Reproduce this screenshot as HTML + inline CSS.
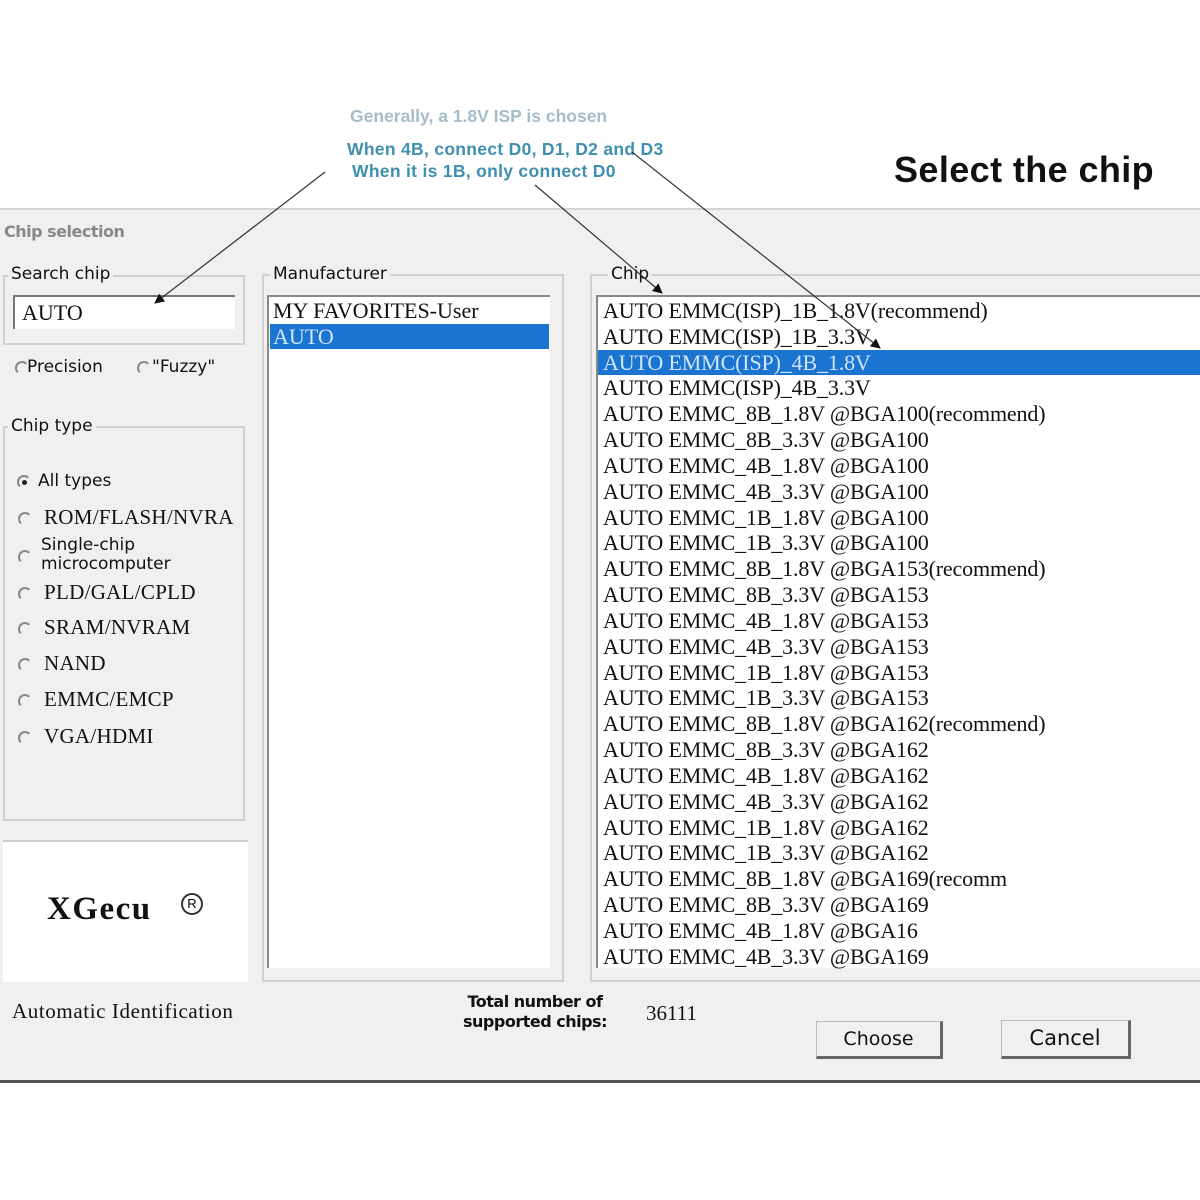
<!DOCTYPE html>
<html><head><meta charset="utf-8"><style>
*{margin:0;padding:0;box-sizing:border-box}
body{width:1200px;height:1200px;background:#fff;position:relative;overflow:hidden;font-family:"Liberation Sans",sans-serif}
.a{position:absolute;white-space:nowrap}
.s{font-family:"DejaVu Sans","Liberation Sans",sans-serif}
.serif{font-family:"Liberation Serif",serif;color:#111}
.gb{position:absolute;border:2px solid #d0d0d0}
.lbl{position:absolute;background:#f0f0f0;padding:0 3px;font-size:17px;color:#111;line-height:20px}
.rad{position:absolute;width:14px;height:14px;border-radius:50%;border:2px solid #888;border-right-color:transparent;border-bottom-color:transparent}
.row{position:absolute;left:603px;font-family:"Liberation Serif",serif;font-size:22px;letter-spacing:-0.15px;color:#111;line-height:26px;white-space:nowrap}
.ann{font-family:"Liberation Sans",sans-serif;font-weight:bold;font-size:17.5px}
</style></head><body>
<div class="a ann" style="left:350px;top:106px;color:#a6bcc8">Generally, a 1.8V ISP is chosen</div>
<div class="a ann" style="left:347px;top:139px;color:#3f8fb0;letter-spacing:0.3px">When 4B, connect D0, D1, D2 and D3</div>
<div class="a ann" style="left:352px;top:161px;color:#3f8fb0;letter-spacing:0.3px">When it is 1B, only connect D0</div>
<div class="a" style="left:894px;top:149px;font-size:36px;font-weight:bold;color:#111;font-family:'Liberation Sans',sans-serif;letter-spacing:0.4px">Select the chip</div>

<div class="a" style="left:0;top:208px;width:1200px;height:875px;background:#f0f0f0;border-top:2px solid #d4d4d4;border-bottom:3px solid #555"></div>
<div class="a s" style="left:4px;top:222px;font-size:16px;font-weight:bold;color:#888;letter-spacing:-0.5px">Chip selection</div>

<div class="gb" style="left:3px;top:275px;width:242px;height:70px"></div>
<div class="lbl s" style="left:8px;top:264px">Search chip</div>
<div class="a serif" style="left:13px;top:295px;width:222px;height:34px;background:#fff;border-top:2px solid #777;border-left:2px solid #777;font-size:22px;padding:3px 7px">AUTO</div>
<div class="rad" style="left:15px;top:361px"></div>
<div class="a s" style="left:27px;top:357px;font-size:17px;color:#111">Precision</div>
<div class="rad" style="left:137px;top:361px"></div>
<div class="a s" style="left:152px;top:357px;font-size:17px;color:#111">"Fuzzy"</div>

<div class="gb" style="left:3px;top:426px;width:242px;height:395px"></div>
<div class="lbl s" style="left:8px;top:416px">Chip type</div>
<div class="rad" style="left:17px;top:475px"></div><div class="a" style="left:22px;top:480px;width:5px;height:5px;border-radius:50%;background:#222"></div>
<div class="a s" style="left:38px;top:471px;font-size:17px;color:#111">All types</div>
<div class="rad" style="left:18px;top:512px"></div><div class="a serif" style="left:44px;top:505px;font-size:21px;letter-spacing:0.3px">ROM/FLASH/NVRA</div>
<div class="rad" style="left:18px;top:550px"></div><div class="a s" style="left:41px;top:536px;font-size:17px;color:#111;line-height:19px">Single-chip<br>microcomputer</div>
<div class="rad" style="left:18px;top:587px"></div><div class="a serif" style="left:44px;top:580px;font-size:21px;letter-spacing:0.3px">PLD/GAL/CPLD</div>
<div class="rad" style="left:18px;top:622px"></div><div class="a serif" style="left:44px;top:615px;font-size:21px;letter-spacing:0.3px">SRAM/NVRAM</div>
<div class="rad" style="left:18px;top:658px"></div><div class="a serif" style="left:44px;top:651px;font-size:21px;letter-spacing:0.3px">NAND</div>
<div class="rad" style="left:18px;top:694px"></div><div class="a serif" style="left:44px;top:687px;font-size:21px;letter-spacing:0.3px">EMMC/EMCP</div>
<div class="rad" style="left:18px;top:731px"></div><div class="a serif" style="left:44px;top:724px;font-size:21px;letter-spacing:0.3px">VGA/HDMI</div>

<div class="a" style="left:3px;top:840px;width:245px;height:142px;background:#fff;border-top:2px solid #ccc"></div>
<div class="a serif" style="left:47px;top:891px;font-size:33px;font-weight:bold;letter-spacing:1.5px">XGecu</div>
<div class="a" style="left:181px;top:893px;width:22px;height:22px;border:2px solid #333;border-radius:50%;font-size:13px;text-align:center;line-height:18px">R</div>

<div class="gb" style="left:262px;top:274px;width:302px;height:708px"></div>
<div class="lbl s" style="left:270px;top:264px">Manufacturer</div>
<div class="a" style="left:267px;top:295px;width:283px;height:673px;background:#fff;border-top:2px solid #888;border-left:2px solid #888"></div>
<div class="a serif" style="left:273px;top:298px;font-size:22px;letter-spacing:0px">MY FAVORITES-User</div>
<div class="a serif" style="left:270px;top:324px;width:279px;height:25px;background:#1a74d0;color:#cfe4ff;font-size:22px;line-height:25px;padding-left:3px">AUTO</div>

<div class="gb" style="left:590px;top:274px;width:615px;height:708px"></div>
<div class="lbl s" style="left:608px;top:264px">Chip</div>
<div class="a" style="left:596px;top:295px;width:610px;height:673px;background:#fff;border-top:2px solid #888;border-left:2px solid #888"></div>
<div class="a" style="left:598px;top:350px;width:602px;height:25px;background:#1a74d0"></div>

<div class="row" style="top:298px">AUTO EMMC(ISP)_1B_1.8V(recommend)</div>
<div class="row" style="top:324px">AUTO EMMC(ISP)_1B_3.3V</div>
<div class="row" style="top:350px;color:#cfe4ff">AUTO EMMC(ISP)_4B_1.8V</div>
<div class="row" style="top:375px">AUTO EMMC(ISP)_4B_3.3V</div>
<div class="row" style="top:401px">AUTO EMMC_8B_1.8V @BGA100(recommend)</div>
<div class="row" style="top:427px">AUTO EMMC_8B_3.3V @BGA100</div>
<div class="row" style="top:453px">AUTO EMMC_4B_1.8V @BGA100</div>
<div class="row" style="top:479px">AUTO EMMC_4B_3.3V @BGA100</div>
<div class="row" style="top:505px">AUTO EMMC_1B_1.8V @BGA100</div>
<div class="row" style="top:530px">AUTO EMMC_1B_3.3V @BGA100</div>
<div class="row" style="top:556px">AUTO EMMC_8B_1.8V @BGA153(recommend)</div>
<div class="row" style="top:582px">AUTO EMMC_8B_3.3V @BGA153</div>
<div class="row" style="top:608px">AUTO EMMC_4B_1.8V @BGA153</div>
<div class="row" style="top:634px">AUTO EMMC_4B_3.3V @BGA153</div>
<div class="row" style="top:660px">AUTO EMMC_1B_1.8V @BGA153</div>
<div class="row" style="top:685px">AUTO EMMC_1B_3.3V @BGA153</div>
<div class="row" style="top:711px">AUTO EMMC_8B_1.8V @BGA162(recommend)</div>
<div class="row" style="top:737px">AUTO EMMC_8B_3.3V @BGA162</div>
<div class="row" style="top:763px">AUTO EMMC_4B_1.8V @BGA162</div>
<div class="row" style="top:789px">AUTO EMMC_4B_3.3V @BGA162</div>
<div class="row" style="top:815px">AUTO EMMC_1B_1.8V @BGA162</div>
<div class="row" style="top:840px">AUTO EMMC_1B_3.3V @BGA162</div>
<div class="row" style="top:866px">AUTO EMMC_8B_1.8V @BGA169(recomm</div>
<div class="row" style="top:892px">AUTO EMMC_8B_3.3V @BGA169</div>
<div class="row" style="top:918px">AUTO EMMC_4B_1.8V @BGA16</div>
<div class="row" style="top:944px">AUTO EMMC_4B_3.3V @BGA169</div>

<div class="a serif" style="left:12px;top:999px;font-size:21px;letter-spacing:0.6px">Automatic Identification</div>
<div class="a s" style="left:463px;top:992px;font-size:16px;font-weight:bold;color:#111;text-align:center;line-height:20px;letter-spacing:-0.5px">Total number of<br>supported chips:</div>
<div class="a serif" style="left:646px;top:1001px;font-size:21px">36111</div>
<div class="a s" style="left:816px;top:1021px;width:127px;height:38px;background:#f0f0f0;border:1px solid #bbb;border-right:3px solid #666;border-bottom:3px solid #666;text-align:center;line-height:34px;font-size:19px;color:#111">Choose</div>
<div class="a s" style="left:1001px;top:1020px;width:130px;height:39px;background:#f0f0f0;border:1px solid #bbb;border-right:3px solid #666;border-bottom:3px solid #666;text-align:center;line-height:35px;font-size:21px;color:#111">Cancel</div>

<svg class="a" style="left:0;top:0" width="1200" height="1200">
<defs><marker id="m" markerWidth="10" markerHeight="10" refX="9" refY="5" orient="auto" markerUnits="userSpaceOnUse"><path d="M0,0L10,5L0,10z" fill="#111"/></marker></defs>
<line x1="325" y1="172" x2="155" y2="303" stroke="#333" stroke-width="1.2" marker-end="url(#m)"/>
<line x1="535" y1="185" x2="662" y2="293" stroke="#333" stroke-width="1.2" marker-end="url(#m)"/>
<line x1="632" y1="152" x2="880" y2="348" stroke="#333" stroke-width="1.2" marker-end="url(#m)"/>
</svg>
</body></html>
